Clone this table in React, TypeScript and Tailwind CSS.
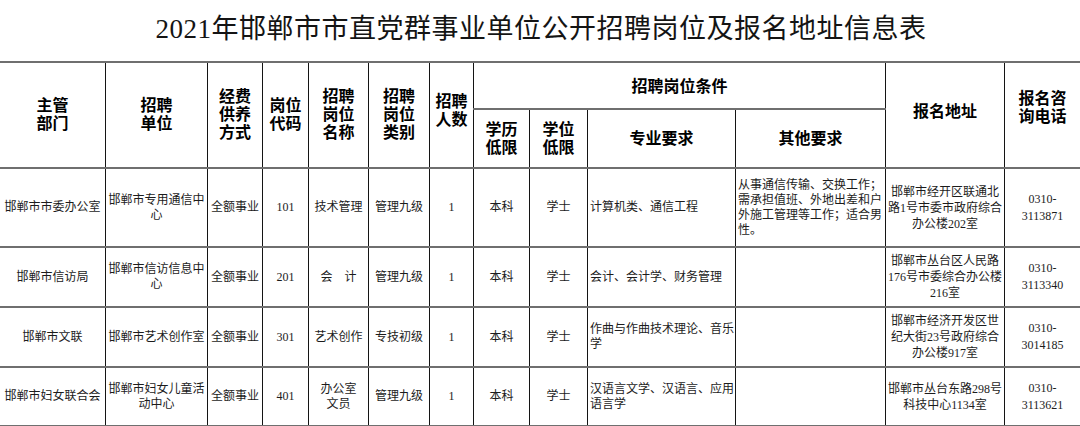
import React from "react";

type Row = {
	dept: string;
	unit: string;
	fund: string;
	code: string;
	post: React.ReactNode;
	level: string;
	count: string;
	edu: string;
	degree: string;
	major: React.ReactNode;
	other: React.ReactNode;
	addr: React.ReactNode;
	phone: string;
	h: string;
};

const rows: Row[] = [
	{
		dept: "邯郸市市委办公室",
		unit: "邯郸市专用通信中心",
		fund: "全额事业",
		code: "101",
		post: "技术管理",
		level: "管理九级",
		count: "1",
		edu: "本科",
		degree: "学士",
		major: "计算机类、通信工程",
		other: (
			<>
				从事通信传输、交换工作；
				<br />
				需承担值班、外地出差和户
				<br />
				外施工管理等工作；适合男
				<br />
				性。
			</>
		),
		addr: (
			<>
				邯郸市经开区联通北
				<br />
				路1号市委市政府综合
				<br />
				办公楼202室
			</>
		),
		phone: "3113871",
		h: "h-[79px]",
	},
	{
		dept: "邯郸市信访局",
		unit: "邯郸市信访信息中心",
		fund: "全额事业",
		code: "201",
		post: "会　计",
		level: "管理九级",
		count: "1",
		edu: "本科",
		degree: "学士",
		major: "会计、会计学、财务管理",
		other: "",
		addr: (
			<>
				邯郸市丛台区人民路
				<br />
				176号市委综合办公楼
				<br />
				216室
			</>
		),
		phone: "3113340",
		h: "h-[60px]",
	},
	{
		dept: "邯郸市文联",
		unit: "邯郸市艺术创作室",
		fund: "全额事业",
		code: "301",
		post: "艺术创作",
		level: "专技初级",
		count: "1",
		edu: "本科",
		degree: "学士",
		major: (
			<>
				作曲与作曲技术理论、音乐
				<br />
				学
			</>
		),
		other: "",
		addr: (
			<>
				邯郸市经济开发区世
				<br />
				纪大街23号政府综合
				<br />
				办公楼917室
			</>
		),
		phone: "3014185",
		h: "h-[60px]",
	},
	{
		dept: "邯郸市妇女联合会",
		unit: "邯郸市妇女儿童活动中心",
		fund: "全额事业",
		code: "401",
		post: (
			<>
				办公室
				<br />
				文员
			</>
		),
		level: "管理九级",
		count: "1",
		edu: "本科",
		degree: "学士",
		major: (
			<>
				汉语言文学、汉语言、应用
				<br />
				语言学
			</>
		),
		other: "",
		addr: (
			<>
				邯郸市丛台东路298号
				<br />
				科技中心1134室
			</>
		),
		phone: "3113621",
		h: "h-[59px]",
	},
];

const widths = [106, 102, 55, 46, 60, 61, 44, 56, 58, 148, 150, 119, 76];

const cell =
	"border-y-2 border-y-[#6f6f6f] border-x border-x-[#141414] p-0 align-middle";
const head = cn(cell, "text-center text-[16px] font-bold leading-[18px] text-black");
const body = cn(cell, "text-center text-[12px] leading-[15px] text-[#1c1c1c]");
const bodyLeft = cn(cell, "pl-[2px] text-left text-[12px] leading-[15px] text-[#1c1c1c]");

function cn(...parts: string[]) {
	return parts.join(" ");
}

export default function App() {
	return (
		<div
			className="h-[426px] w-[1080px] overflow-hidden bg-white"
			style={{ fontFamily: '"Liberation Serif", "Noto Sans CJK SC", serif' }}
		>
			<div className="flex h-[61px] items-center justify-center pb-[2px] pl-[2px]">
				<h1 className="text-[27px] leading-none tracking-[0.5px] text-[#141414]">
					2021年邯郸市市直党群事业单位公开招聘岗位及报名地址信息表
				</h1>
			</div>

			<table className="-ml-px w-[1081px] table-fixed border-collapse">
				<colgroup>
					{widths.map((w, i) => (
						<col key={i} style={{ width: w }} />
					))}
				</colgroup>
				<thead>
					<tr className="h-[47px]">
						<th rowSpan={2} className={head}>
							主管
							<br />
							部门
						</th>
						<th rowSpan={2} className={head}>
							招聘
							<br />
							单位
						</th>
						<th rowSpan={2} className={head}>
							经费
							<br />
							供养
							<br />
							方式
						</th>
						<th rowSpan={2} className={head}>
							岗位
							<br />
							代码
						</th>
						<th rowSpan={2} className={head}>
							招聘
							<br />
							岗位
							<br />
							名称
						</th>
						<th rowSpan={2} className={head}>
							招聘
							<br />
							岗位
							<br />
							类别
						</th>
						<th rowSpan={2} className={cn(head, "pb-[8px]")}>
							招聘
							<br />
							人数
						</th>
						<th colSpan={4} className={cn(head, "pt-[2px]")}>
							招聘岗位条件
						</th>
						<th rowSpan={2} className={cn(head, "pb-[6px]")}>
							报名地址
						</th>
						<th rowSpan={2} className={cn(head, "pb-[14px]")}>
							报名咨
							<br />
							询电话
						</th>
					</tr>
					<tr className="h-[59px]">
						<th className={cn(head, "border-t border-t-[#141414]")}>
							学历
							<br />
							低限
						</th>
						<th className={cn(head, "border-t border-t-[#141414]")}>
							学位
							<br />
							低限
						</th>
						<th className={cn(head, "border-t border-t-[#141414]")}>专业要求</th>
						<th className={cn(head, "border-t border-t-[#141414]")}>其他要求</th>
					</tr>
				</thead>
				<tbody>
					{rows.map((r) => (
						<tr key={r.code} className={r.h}>
							<td className={body}>{r.dept}</td>
							<td className={cn(body, "px-[2px]")}>{r.unit}</td>
							<td className={body}>{r.fund}</td>
							<td className={cn(body, "text-[11px]")}>{r.code}</td>
							<td className={body}>{r.post}</td>
							<td className={body}>{r.level}</td>
							<td className={cn(body, "text-[11px]")}>{r.count}</td>
							<td className={body}>{r.edu}</td>
							<td className={body}>{r.degree}</td>
							<td className={bodyLeft}>{r.major}</td>
							<td className={bodyLeft}>{r.other}</td>
							<td className={cn(body, "leading-[16px]")}>{r.addr}</td>
							<td className={cn(body, "text-[12px] leading-[17px]")}>
								0310-
								<br />
								{r.phone}
							</td>
						</tr>
					))}
				</tbody>
			</table>
		</div>
	);
}
